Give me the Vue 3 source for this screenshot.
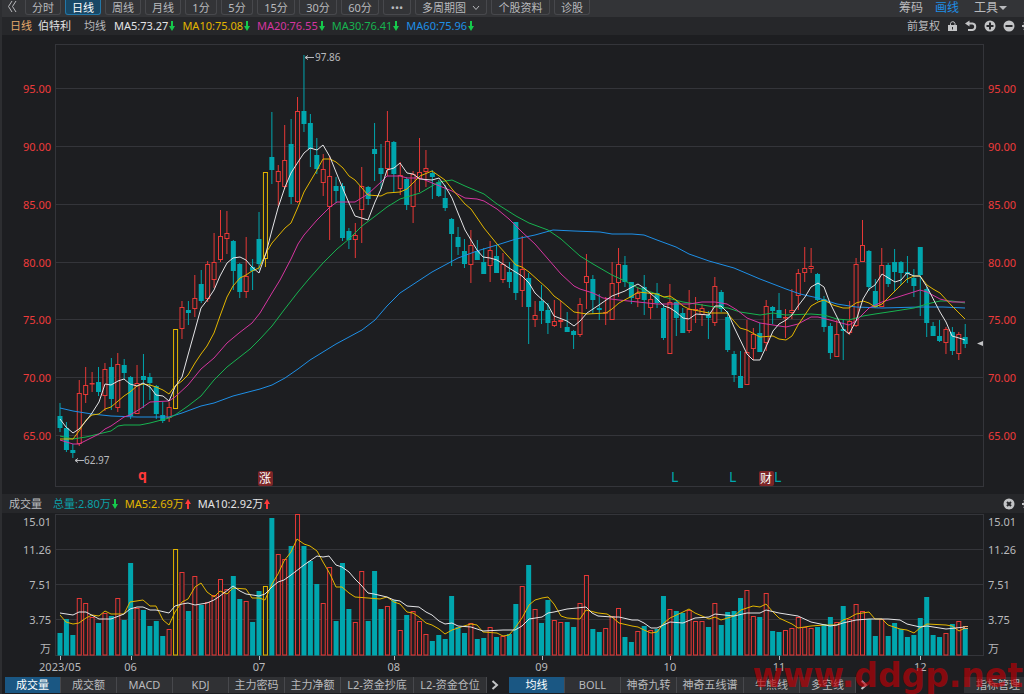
<script setup>
const periods = [
  { t: '分时', w: 'w2' }, { t: '日线', w: 'w2', on: true }, { t: '周线', w: 'w2' }, { t: '月线', w: 'w2' },
  { t: '1分', w: 'w1' }, { t: '5分', w: 'w1' }, { t: '15分', w: 'w3' }, { t: '30分', w: 'w3' }, { t: '60分', w: 'w3' },
  { t: '•••', w: 'dots' }, { t: '多周期图', w: 'w5', drop: true }, { t: '个股资料', w: 'w4' }, { t: '诊股', w: 'w2' },
]
const averages = [
  { t: 'MA5:73.27', c: 'white' }, { t: 'MA10:75.08', c: 'yellow' }, { t: 'MA20:76.55', c: 'pink' },
  { t: 'MA30:76.41', c: 'green' }, { t: 'MA60:75.96', c: 'blue' },
]
const volumeStats = [
  { t: '总量:2.80万', c: 'teal', up: false }, { t: 'MA5:2.69万', c: 'yellow', up: true }, { t: 'MA10:2.92万', c: 'white', up: true },
]
const leftTabs = [
  { t: '成交量', on: true }, { t: '成交额' }, { t: 'MACD' }, { t: 'KDJ' }, { t: '主力密码' }, { t: '主力净额' },
  { t: 'L2-资金抄底', wide: true }, { t: 'L2-资金仓位', wide: true },
]
const rightTabs = [
  { t: '均线', on: true }, { t: 'BOLL' }, { t: '神奇九转' }, { t: '神奇五线谱', mid: true }, { t: '牛熊线' }, { t: '多空线' },
]
const priceGrid = [
  ['95.00', 88], ['90.00', 146], ['85.00', 204], ['80.00', 262], ['75.00', 319], ['70.00', 377], ['65.00', 435],
]
const volumeGrid = [['15.01', 514, 526], ['11.26', 549, 554], ['7.51', 584, 589], ['3.75', 619, 624]]
const months = [['2023/05', 0], ['06', 11], ['07', 31], ['08', 52], ['09', 75], ['10', 95], ['11', 112], ['12', 134]]

const x = (i) => 60 + 6.42 * i

// kind (g down, r up, y limit-up), high, body top, body bottom, low, volume top
const rows = `g403,416,428,432,633 g422,428,450,452,619 g444,450,453,458,635 r380,393,444,446,598 r367,385,395,403,603
r372,383,384,392,617 g367,382,392,396,623 r363,369,396,411,613 g358,367,399,410,616 r353,364,408,412,598
g359,365,373,379,620 g376,377,416,419,563 r365,383,414,414,608 g354,376,380,408,610 g373,377,383,400,626
g385,386,414,419,621 g402,415,421,423,636 r402,407,418,422,629 y329,329,409,409,549 r301,307,329,339,572
g301,310,313,325,611 r275,298,309,317,576 g270,284,301,303,605 r261,264,299,302,602 r233,262,280,288,595
r210,236,260,262,579 r211,233,239,254,589 g240,241,271,290,576 g263,264,292,298,599 r237,276,292,298,601
g259,267,271,290,622 g212,239,264,270,591 y172,172,259,267,586 g112,157,170,184,518 r165,171,182,206,554
r125,160,187,189,559 g119,144,197,204,546 r97,111,202,203,514 g55,111,124,132,546 g114,123,149,167,561
g138,155,169,174,584 r154,169,183,196,603 r156,176,207,240,567 g177,186,191,203,621 g183,186,238,241,563
g228,231,240,249,609 r223,235,240,258,622 r167,186,210,243,571 g186,187,199,205,621 g123,149,154,181,571
g144,168,174,189,609 r111,141,169,176,606 g141,142,174,192,600 r162,175,189,195,630 g177,179,205,210,615
r171,174,207,223,611 r138,172,179,192,621 r150,168,172,187,634 g170,173,177,199,641 g180,182,196,197,635
g185,198,208,211,639 g218,219,234,266,596 g227,237,247,255,627 g239,251,264,268,633 r230,245,265,283,623
g240,251,260,260,639 g248,262,274,274,638 r241,250,266,282,627 g245,256,273,273,637 r253,264,280,283,636
g262,272,282,288,634 g222,222,293,300,604 r236,269,291,307,586 g273,278,307,344,565 r301,315,320,327,609
g285,301,311,324,623 g303,310,323,334,600 r300,321,326,327,620 r301,320,322,328,622 g312,327,332,332,622
g330,331,335,349,627 r298,304,335,337,603 r254,276,283,309,575 g275,279,300,314,629 g294,308,310,320,632
r297,312,313,325,628 r262,283,320,320,616 r248,264,283,297,608 g256,265,282,287,637 g282,282,298,304,642
r287,293,299,307,631 g275,287,300,315,626 r292,299,308,319,630 g283,293,303,308,629 g304,308,338,340,596
r284,302,354,354,609 g300,302,318,336,611 g308,313,333,333,613 r290,309,331,333,610 r297,309,310,323,621
r304,308,315,326,621 g311,315,318,339,627 r277,286,323,326,603 g290,292,309,312,625 g311,317,350,352,612
g351,354,375,382,611 g351,376,388,388,598 r320,352,385,385,590 r328,334,349,360,616 g323,333,352,352,617
r300,306,343,351,593 g306,307,311,324,631 g293,310,318,318,632 r309,317,318,338,630 r289,310,313,319,628
r269,273,296,310,617 r247,268,273,282,627 r248,266,269,273,628 g273,274,300,301,627 g296,299,327,332,624
g323,326,353,359,617 r320,334,357,357,622 g320,329,331,360,606 r301,321,333,335,619 r258,264,326,327,604
r220,245,262,262,611 g250,251,287,291,619 g279,291,307,307,636 r248,265,307,307,619 g263,265,284,287,636
g249,262,272,291,623 g261,262,273,285,629 g256,272,274,283,637 g269,278,286,297,635 g247,247,275,316,618
g287,289,323,337,597 g322,326,336,336,635 g320,336,341,342,637 r327,329,343,354,633 g327,332,351,355,624
r332,334,354,360,621 g324,337,344,348,628`
const candles = rows.trim().split(/\s+/).map((s, i) => {
  const [high, top, bottom, low, vol] = s.slice(1).split(',').map(Number)
  return { kind: s[0], x: x(i), high, top, bottom, low, vol }
})

const priceLines = [
  ['blue', '60,408 73,411 92,414 111,416 137,417 169,417 182,413 201,406 214,403 233,396 260,389 272,385 285,378 298,369 310,360 323,352 336,344 349,337 362,330 375,320 387,306 400,293 432,272 458,258 477,251 497,245 516,239 535,235 553,230 574,231 600,232 612,234 632,234 644,235 657,240 676,247 689,254 709,261 734,268 760,279 786,289 800,294 818,298 837,304 856,307 882,308 920,307 943,307 965,308'],
  ['green', '60,436 73,439 86,437 111,431 118,426 124,425 140,425 150,423 169,418 175,415 188,406 201,396 214,380 227,367 250,349 260,339 272,326 284,310 298,292 308,280 323,263 337,249 349,239 362,226 374,217 387,207 400,199 420,193 432,186 439,182 452,180 465,186 484,194 497,204 516,216 529,223 548,230 561,239 580,256 593,264 612,275 625,281 638,288 651,292 664,297 683,302 696,304 715,307 728,308 740,312 760,315 773,313 786,315 811,314 824,315 837,319 849,320 863,316 875,314 895,311 914,308 927,304 940,301 952,301 965,303'],
  ['pink', '60,440 73,444 79,444 99,434 105,429 111,426 124,417 130,415 140,409 150,402 169,401 175,397 188,385 201,369 214,358 227,343 239,333 252,323 260,313 272,293 280,280 291,259 298,244 304,235 317,220 330,207 337,202 355,202 368,194 381,182 387,176 400,176 407,178 420,178 452,191 465,198 477,199 484,201 497,209 509,219 522,232 535,244 561,274 574,286 580,289 593,293 603,298 619,300 638,302 657,304 689,304 702,302 715,302 727,304 737,310 747,318 760,323 786,327 798,324 811,317 818,317 830,320 849,325 856,321 869,308 882,302 901,296 920,290 927,292 940,299 952,302 965,302'],
  ['yellow', '60,439 73,439 79,431 86,420 92,415 99,414 105,409 111,407 124,396 130,392 137,386 143,384 150,385 156,387 163,390 169,394 175,386 182,381 188,375 195,363 201,354 207,346 214,333 220,316 227,297 233,286 240,278 246,275 252,271 259,268 266,253 272,243 285,228 291,223 298,207 304,192 317,170 323,159 330,159 336,162 343,168 349,176 355,180 368,195 381,196 387,193 400,192 407,189 420,176 432,171 445,180 452,189 465,204 471,209 484,228 497,244 516,265 522,267 529,272 548,289 554,296 561,301 574,312 587,314 606,313 612,309 619,303 632,296 638,292 657,294 664,297 670,296 676,300 683,306 689,309 709,313 727,313 740,328 747,330 760,337 773,336 779,339 786,340 792,336 798,325 811,306 818,302 824,300 833,305 843,308 849,308 856,303 863,301 869,303 875,307 882,304 888,298 895,291 907,279 914,276 920,276 927,285 933,289 940,293 952,306 965,319'],
  ['white', '60,419 66,427 73,433 79,429 86,421 92,413 99,402 105,384 111,385 118,381 124,379 130,384 137,386 143,383 150,387 156,395 163,396 169,401 175,387 182,377 188,355 195,330 201,308 208,299 214,290 220,276 227,263 233,258 240,257 246,260 252,267 259,273 266,253 272,230 278,208 285,187 291,173 298,162 304,153 310,148 317,150 323,145 330,157 336,172 343,189 349,203 355,216 368,220 375,202 381,189 387,170 394,168 400,163 407,173 413,174 420,179 432,180 439,178 445,186 452,198 458,213 465,230 477,250 483,257 490,258 497,260 509,268 522,276 529,283 535,293 548,305 554,316 567,321 574,326 580,321 587,313 599,305 612,296 625,291 632,287 638,284 644,288 657,299 664,306 670,308 676,312 683,318 689,319 696,314 709,315 715,306 721,306 728,313 734,327 747,354 753,360 760,360 766,347 773,331 779,324 786,320 792,315 798,306 805,297 811,287 818,283 824,287 830,303 843,329 849,334 856,321 863,299 869,289 875,285 882,274 895,282 901,280 907,273 914,276 920,276 927,287 940,312 946,322 952,336 959,338 965,340'],
]
const volumeLines = [
  ['yellow', '60,615 66,622 73,624 79,623 86,618 92,615 99,616 105,611 111,614 124,614 130,602 143,600 150,606 156,606 163,620 169,625 175,612 182,602 188,599 195,587 201,583 207,592 214,597 220,591 227,594 233,588 246,589 252,598 259,598 265,600 272,584 278,574 284,561 291,552 297,539 304,544 310,546 317,551 323,562 330,574 336,587 342,587 349,593 355,597 368,598 380,599 387,597 394,602 400,604 407,612 413,613 419,617 426,623 432,625 439,629 445,634 452,630 464,626 471,624 477,625 483,632 497,633 503,636 509,635 515,628 522,618 529,605 535,600 542,598 548,597 554,604 561,616 567,618 580,619 586,610 598,613 607,614 612,617 619,623 632,626 638,627 644,630 651,633 657,632 664,623 670,618 683,612 689,609 695,613 709,619 715,617 721,620 734,616 741,610 753,606 760,607 766,604 773,612 779,618 792,624 798,628 811,626 824,625 837,625 843,620 849,618 856,614 869,612 875,619 882,619 888,625 900,629 907,630 914,633 920,628 927,624 946,625 952,626 959,631 965,628'],
  ['white', '60,613 73,615 79,612 86,612 99,619 111,619 124,614 130,609 137,607 143,607 150,610 156,610 169,613 175,606 182,604 188,603 195,605 207,603 214,600 220,596 233,586 240,591 246,594 259,596 265,594 272,587 278,582 284,580 291,575 304,565 317,556 323,557 329,556 336,565 342,567 349,572 355,579 361,585 368,593 374,594 387,597 394,600 400,601 407,606 419,607 426,612 432,615 439,621 445,624 452,623 458,626 471,627 483,631 503,630 515,630 522,626 529,619 542,617 548,613 554,612 567,609 586,607 592,613 598,616 612,617 619,617 632,620 638,620 644,623 651,628 657,628 670,622 683,623 695,618 709,617 715,614 734,616 747,613 760,613 766,610 779,613 798,616 811,622 830,626 837,625 843,623 856,620 869,619 888,619 900,620 907,624 920,627 927,626 946,629 965,627'],
]
</script>

<template>
  <main class="terminal">
    <nav class="toolbar" aria-label="周期">
      <button class="collapse" aria-label="收起">
        <svg width="10" height="13" viewBox="0 0 10 13"><path d="M5 1 L1.500 6.500 L5 12 M9 1 L5.500 6.500 L9 12" /></svg>
      </button>
      <button v-for="p in periods" :key="p.t" class="period" :class="[p.w, { on: p.on }]">
        {{ p.t }}
        <svg v-if="p.drop" width="8" height="6" viewBox="0 0 8 6"><path d="M1 1 L4 4.500 L7 1" /></svg>
      </button>
      <div class="tools">
        <button>筹码</button>
        <button class="blue">画线</button>
        <button>工具<i class="caret"></i></button>
      </div>
    </nav>

    <header class="info">
      <span class="orange">日线</span>
      <span class="name">伯特利</span>
      <span class="label">均线</span>
      <span v-for="a in averages" :key="a.t" class="stat" :class="a.c">{{ a.t }}<svg class="arrow down" width="6" height="10" viewBox="0 0 6 10"><path d="M2 0H4V5H6L3 10L0 5H2Z" /></svg></span>
      <div class="actions">
        <button>前复权</button>
        <button aria-label="解锁">
          <svg width="11" height="12" viewBox="0 0 11 12"><path class="line" d="M3.500 5V3.500a2.300 2.300 0 0 1 4.500 0V5" /><path class="solid" fill-rule="evenodd" d="M1 5H10V11H1ZM5 7V9.500H6V7Z" /></svg>
        </button>
        <button aria-label="撤销">
          <svg width="12" height="12" viewBox="0 0 12 12"><path class="line thick" d="M2 3.500H7.500a3.300 3.300 0 0 1 0 6.500H3" /><path class="solid" d="M0 3.500L4.500 0.500V6.500Z" /></svg>
        </button>
        <button aria-label="放大">
          <svg width="12" height="12" viewBox="0 0 12 12"><circle class="solid" cx="6" cy="6" r="5.500" /><path class="cut" d="M2.500 6H9.500M6 2.500V9.500" /></svg>
        </button>
        <button aria-label="缩小">
          <svg width="12" height="12" viewBox="0 0 12 12"><circle class="solid" cx="6" cy="6" r="5.500" /><path class="cut" d="M2.500 6H9.500" /></svg>
        </button>
        <button aria-label="设置">
          <svg width="12" height="12" viewBox="0 0 12 12"><circle class="line thick" cx="6" cy="6" r="3.500" /><path class="line thick" d="M0 6H2.500M9.500 6H12M6 0V2.500M6 9.500V12M2 2L3.500 3.500M10 2L8.500 3.500M2 10L3.500 8.500M10 10L8.500 8.500" /></svg>
        </button>
      </div>
    </header>

    <svg class="chart" viewBox="2 35 1022 459" role="img" aria-label="日线图">
      <g class="grid">
        <rect x="55.500" y="44.500" width="928" height="442" />
        <path v-for="g in priceGrid" :key="g[0]" :d="`M56 ${g[1] + 0.5}H983`" />
      </g>
      <g class="price">
        <template v-for="g in priceGrid" :key="g[0]">
          <text x="51" :y="g[1] + 5" text-anchor="end">{{ g[0] }}</text>
          <text x="988" :y="g[1] + 5">{{ g[0] }}</text>
        </template>
      </g>
      <g v-for="c in candles" :key="c.x" :class="'k-' + c.kind">
        <path class="wick" :d="`M${c.x} ${c.high}V${c.top}M${c.x} ${c.bottom}V${c.low}`" />
        <rect v-if="c.kind === 'g'" :x="c.x - 2.5" :y="c.top" width="5" :height="c.bottom - c.top" />
        <rect v-else :x="c.x - 2" :y="c.top + 0.5" width="4" :height="Math.max(c.bottom - c.top - 1, 0.5)" />
      </g>
      <polyline v-for="l in priceLines" :key="l[0]" class="ma" :class="l[0]" :points="l[1]" />
      <path class="pointer" d="M305 57.500H314M308 55.500L305 57.500L308 59.500M75 460.500H84M78 458.500L75 460.500L78 462.500" />
      <text class="note" x="315" y="61">97.86</text>
      <text class="note" x="84" y="464">62.97</text>
      <path class="last" d="M977 343.500L983 341V346Z" />
      <text class="mark-q" x="138" y="480">q</text>
      <rect class="badge" x="258" y="471" width="15" height="15" rx="2" />
      <text class="badge-text" x="265" y="483">涨</text>
      <rect class="badge" x="759" y="471" width="15" height="15" rx="2" />
      <text class="badge-text" x="766" y="483">财</text>
      <text class="mark-l" x="671" y="482">L</text>
      <text class="mark-l" x="729" y="482">L</text>
      <text class="mark-l" x="774" y="482">L</text>
    </svg>

    <header class="info volume-info">
      <span class="label">成交量</span>
      <span v-for="s in volumeStats" :key="s.t" class="stat" :class="s.c">{{ s.t }}<svg class="arrow" :class="s.up ? 'up' : 'down'" width="6" height="10" viewBox="0 0 6 10"><path :d="s.up ? 'M2 10H4V5H6L3 0L0 5H2Z' : 'M2 0H4V5H6L3 10L0 5H2Z'" /></svg></span>
      <div class="actions">
        <button aria-label="关闭">
          <svg width="12" height="12" viewBox="0 0 12 12"><circle class="solid" cx="6" cy="6" r="5.500" /><path class="cut" d="M4 4L8 8M8 4L4 8" /></svg>
        </button>
        <button aria-label="设置">
          <svg width="12" height="12" viewBox="0 0 12 12"><circle class="line thick" cx="6" cy="6" r="3.500" /><path class="line thick" d="M0 6H2.500M9.500 6H12M6 0V2.500M6 9.500V12M2 2L3.500 3.500M10 2L8.500 3.500M2 10L3.500 8.500M10 10L8.500 8.500" /></svg>
        </button>
      </div>
    </header>

    <svg class="chart" viewBox="2 513 1022 163" role="img" aria-label="成交量图">
      <g class="grid">
        <rect x="55.500" y="514.500" width="928" height="141" />
        <path v-for="g in volumeGrid" :key="g[0]" :d="`M56 ${g[1] + 0.5}H983`" />
      </g>
      <g class="axis">
        <template v-for="g in volumeGrid" :key="g[0]">
          <text x="51" :y="g[2]" text-anchor="end">{{ g[0] }}</text>
          <text x="988" :y="g[2]">{{ g[0] }}</text>
        </template>
        <text x="51" y="653" text-anchor="end">万</text>
        <text x="988" y="653">万</text>
        <template v-for="m in months" :key="m[0]">
          <path class="tick" :d="`M${Math.round(x(m[1])) + 0.5} 656V660`" />
          <text :x="x(m[1])" y="671" text-anchor="middle">{{ m[0] }}</text>
        </template>
      </g>
      <g v-for="c in candles" :key="c.x" :class="'k-' + c.kind">
        <rect v-if="c.kind === 'g'" :x="c.x - 2.5" :y="c.vol" width="5" :height="655.5 - c.vol" />
        <rect v-else :x="c.x - 2" :y="c.vol + 0.5" width="4" :height="654.5 - c.vol" />
      </g>
      <polyline v-for="l in volumeLines" :key="l[0]" class="ma" :class="l[0]" :points="l[1]" />
      <path class="ma orange" d="M963 626.500H968M963 628.500H968" />
    </svg>

    <footer class="tabs">
      <div class="group">
        <button v-for="t in leftTabs" :key="t.t" :class="{ on: t.on, wide: t.wide }">{{ t.t }}</button>
      </div>
      <button class="next" aria-label="更多指标"><svg width="8" height="10" viewBox="0 0 8 10"><path d="M1.500 1L6 5L1.500 9" /></svg></button>
      <div class="group">
        <button v-for="t in rightTabs" :key="t.t" :class="{ on: t.on, mid: t.mid }">{{ t.t }}</button>
      </div>
      <button class="next tight" aria-label="更多均线"><svg width="8" height="10" viewBox="0 0 8 10"><path d="M1.500 1L6 5L1.500 9" /></svg></button>
      <button class="manage">指标管理</button>
    </footer>
    <div class="watermark">www.ddgp.net</div>
  </main>
</template>

<style>
body {
  margin: 0;
  background: #1d1e21;
}
</style>

<style scoped>
.terminal {
  position: relative;
  box-sizing: border-box;
  overflow: hidden;
  border-left: 2px solid #2d2e31;
  background: #1d1e21;
  color: #b9babd;
  font-family: "Noto Sans", "Noto Sans CJK SC", sans-serif;
  font-size: 11px;
  line-height: 14px;
}
button {
  box-sizing: border-box;
  margin: 0;
  padding: 0;
  border: 0;
  background: none;
  color: inherit;
  font: inherit;
  white-space: nowrap;
}
svg {
  display: block;
  flex: none;
}
.toolbar {
  display: flex;
  align-items: flex-start;
  gap: 4px;
  height: 17px;
  background: #333437;
}
.collapse {
  width: 19px;
  padding-left: 5px;
}
.collapse path,
.period path {
  fill: none;
  stroke: #b9babd;
}
.period {
  display: flex;
  align-items: center;
  justify-content: center;
  gap: 6px;
  height: 15px;
  padding-top: 1px;
  border: 1px solid #47484c;
  border-top: 0;
  border-radius: 0 0 3px 3px;
}
.period.on {
  border-color: #2377a8;
  background: #184866;
  color: #ffffff;
}
.w1 { width: 32px; }
.w2 { width: 36px; }
.w3 { width: 38px; }
.w4 { width: 59px; }
.w5 { width: 72px; }
.dots { width: 28px; }
.tools {
  display: flex;
  gap: 12px;
  margin-left: auto;
  padding-right: 17px;
  font-size: 12px;
  line-height: 16px;
}
.tools button:last-child {
  display: flex;
  align-items: center;
  gap: 1px;
  padding-left: 3px;
}
.caret {
  border: 4px solid transparent;
  border-top-color: #b9babd;
  border-bottom: 0;
}
.info {
  display: flex;
  align-items: center;
  height: 18px;
  padding-left: 8px;
  background: #26272a;
  white-space: nowrap;
}
.volume-info {
  height: 19px;
  padding-left: 7px;
}
.name {
  margin: 0 13px 0 6px;
  color: #e2e2e4;
}
.info .label {
  margin-right: 8px;
}
.volume-info .label {
  margin-right: 11px;
}
.stat {
  display: flex;
  align-items: center;
  margin-right: 7px;
}
.arrow {
  margin-left: 1px;
}
.arrow.down { fill: #16c94c; }
.arrow.up { fill: #ff3a3a; }
.actions {
  display: flex;
  align-items: center;
  gap: 7px;
  margin-left: auto;
  margin-right: -10px;
}
.solid { fill: #c3c4c6; }
.line {
  fill: none;
  stroke: #c3c4c6;
}
.thick { stroke-width: 2; }
.cut {
  fill: none;
  stroke: #26272a;
  stroke-width: 2;
}
.white { color: #e4e4e6; }
.yellow { color: #e2b500; }
.pink { color: #d535a0; }
.green { color: #17b350; }
.blue { color: #1e8fe6; }
.teal { color: #0ba0a8; }
.orange { color: #e5aa6c; }

.chart {
  width: 100%;
  height: auto;
}
.grid {
  fill: none;
  stroke: #34353a;
}
.price { fill: #ee3b3b; }
.axis { fill: #b9babd; }
.tick { stroke: #b9babd; }
.wick { fill: none; }
.k-g {
  fill: #00a6ae;
}
.k-g .wick { stroke: #00a6ae; }
.k-r {
  fill: #1d1e21;
  stroke: #e63836;
}
.k-y {
  fill: #1d1e21;
  stroke: #e2b500;
}
.ma {
  fill: none;
  stroke: currentColor;
  stroke-linejoin: round;
}
.pointer {
  fill: none;
  stroke: #b9babd;
}
.note {
  fill: #b9babd;
  font-size: 10px;
}
.last { fill: #c3c4c6; }
.mark-q {
  fill: #ff3a3a;
  font-size: 14px;
  font-weight: 700;
}
.mark-l {
  fill: #00a6ae;
  font-size: 14px;
}
.badge { fill: #7c2527; }
.badge-text {
  fill: #ffffff;
  font-size: 12px;
  text-anchor: middle;
}

.tabs {
  display: flex;
  align-items: center;
  height: 18px;
  padding-left: 3px;
}
.group {
  display: flex;
}
.group button {
  width: 56px;
  height: 16px;
  border-right: 1px solid #47484c;
  background: #303134;
}
.group .wide { width: 73px; }
.group .mid { width: 67px; }
.group .on {
  background: #1a5783;
  color: #ffffff;
}
.next {
  padding: 0 10px 0 4px;
}
.next.tight {
  padding-right: 0;
}
.next path {
  fill: none;
  stroke: #c3c4c6;
  stroke-width: 2;
}
.manage {
  width: 60px;
  height: 16px;
  margin-left: auto;
  padding-left: 8px;
  background: #303134;
}
.watermark {
  position: absolute;
  right: 1px;
  bottom: 0;
  color: rgba(190, 0, 6, 0.66);
  font-family: "DejaVu Sans", sans-serif;
  font-size: 33px;
  font-weight: 700;
  line-height: 36px;
  pointer-events: none;
}
</style>
